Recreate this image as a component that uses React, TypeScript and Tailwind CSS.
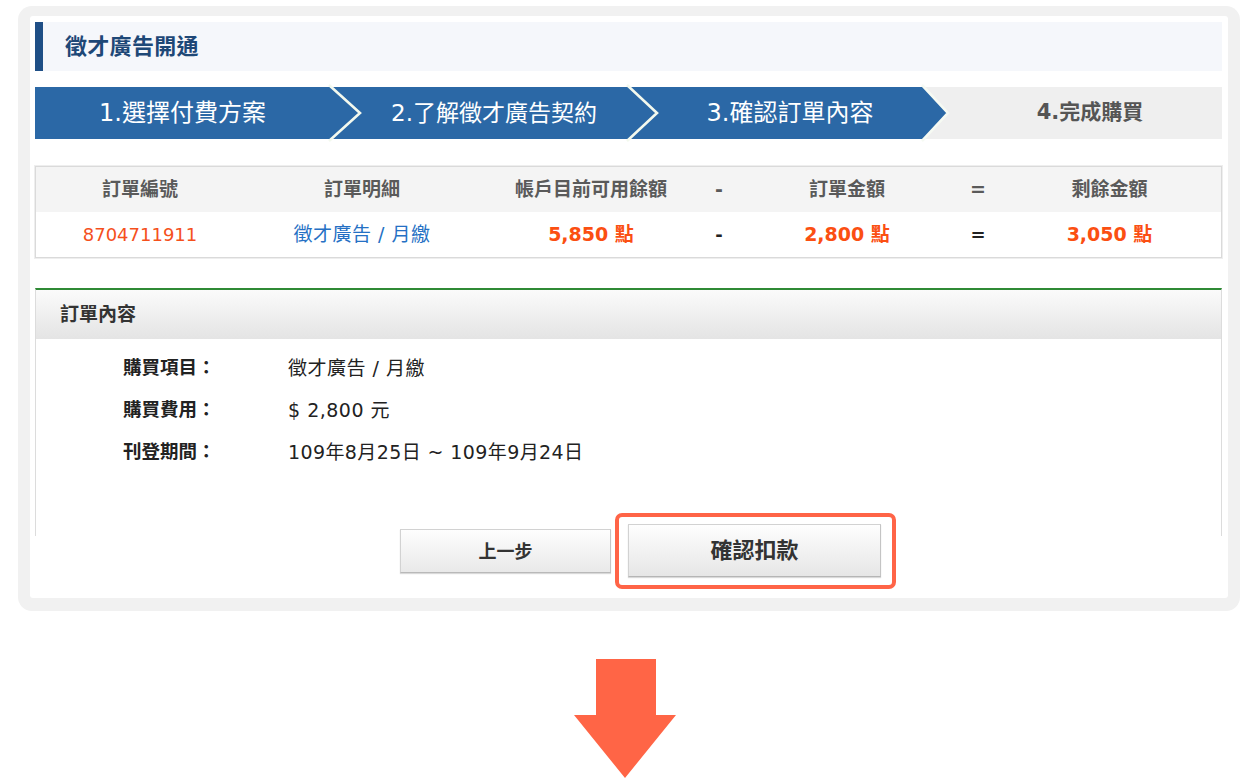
import React from "react";

const BLUE = "#2b68a6";

function Chevron({ d, last }: { d: number; last?: boolean }) {
  return (
    <svg
      className="absolute left-full top-0 z-10 overflow-visible"
      width={d}
      height={52}
      viewBox={`0 0 ${d} 52`}
    >
      <polygon points={`0,0 ${d},26 0,52`} fill={BLUE} />
      <polyline
        points={`-1,-2 ${d},26 -1,54`}
        fill="none"
        stroke={last ? "#f6faf3" : "#f3f9ee"}
        strokeWidth={2.6}
      />
    </svg>
  );
}

export default function App() {
  return (
    <div className="w-[1250px] h-[784px] bg-white font-['DejaVu_Sans','Noto_Sans_CJK_TC',sans-serif] text-[#222]">
      <div className="pt-[6px] pl-[18px]">
        <div className="w-[1222px] rounded-[14px] bg-[#f1f1f1] pt-[10px] pl-[12px] pr-[12px] pb-[13px]">
          <div className="bg-white rounded-[3px] pt-[6px] pl-[5px] pr-[6px] pb-[9px]">
            {/* Title bar */}
            <div className="h-[49px] flex items-center bg-[#f5f7fb] border-l-[8px] border-[#1f4f86]">
              <span className="ml-[22px] text-[22px] font-bold text-[#1e4877] tracking-[0.3px]">
                徵才廣告開通
              </span>
            </div>

            {/* Steps */}
            <div className="mt-[16px] h-[52px] flex bg-[#efefef]">
              <div className="relative w-[295px] flex items-center justify-center text-white text-[24px]" style={{ background: BLUE }}>
                1.選擇付費方案
                <Chevron d={30} />
              </div>
              <div className="relative w-[298px] flex items-center justify-center pl-[30px] text-white text-[23px]" style={{ background: BLUE }}>
                2.了解徵才廣告契約
                <Chevron d={29} />
              </div>
              <div className="relative w-[295px] flex items-center justify-center pl-[29px] text-white text-[24px]" style={{ background: BLUE }}>
                3.確認訂單內容
                <Chevron d={25} last />
              </div>
              <div className="flex-1 flex items-center justify-center pl-[35px] text-[21px] font-bold text-[#555]">
                4.完成購買
              </div>
            </div>

            {/* Order table */}
            <div className="mt-[27px] border border-[#dadada] shadow-[0_0_0_1px_#eeeeee]">
              <div className="grid grid-cols-[208px_236px_222px_34px_222px_40px_1fr] h-[45px] bg-[#f4f4f4] items-center text-center text-[19px] font-bold text-[#5a5a5a]">
                <div>訂單編號</div>
                <div>訂單明細</div>
                <div>帳戶目前可用餘額</div>
                <div>-</div>
                <div>訂單金額</div>
                <div>=</div>
                <div>剩餘金額</div>
              </div>
              <div className="grid grid-cols-[208px_236px_222px_34px_222px_40px_1fr] h-[45px] bg-white items-center text-center text-[18px]">
                <div className="text-[#f5501c]">8704711911</div>
                <div className="text-[#2570c4] text-[19px] tracking-[0.5px]">徵才廣告 / 月繳</div>
                <div className="text-[#fb4f12] font-bold text-[19px]">5,850 點</div>
                <div className="text-[#222] font-bold">-</div>
                <div className="text-[#fb4f12] font-bold text-[19px]">2,800 點</div>
                <div className="text-[#222] font-bold">=</div>
                <div className="text-[#fb4f12] font-bold text-[19px]">3,050 點</div>
              </div>
            </div>

            {/* Order content panel */}
            <div className="mt-[30px]">
              <div className="h-[51px] border-t-2 border-[#2f8a35] bg-gradient-to-b from-[#fbfbfb] to-[#e4e4e4] flex items-center pl-[24px] text-[19px] font-bold text-[#333] border-x border-x-[#dcdcdc]">
                訂單內容
              </div>
              <div className="h-[197px] border-x border-[#dcdcdc] pt-[8px] text-[19px]">
                <div className="h-[42px] flex items-center">
                  <div className="w-[252px] pl-[87px] font-bold text-[#222] text-[18.5px]">購買項目：</div>
                  <div className="text-[#222] tracking-[0.5px]">徵才廣告 / 月繳</div>
                </div>
                <div className="h-[42px] flex items-center">
                  <div className="w-[252px] pl-[87px] font-bold text-[#222] text-[18.5px]">購買費用：</div>
                  <div className="text-[#222] tracking-[0.5px]">$ 2,800 元</div>
                </div>
                <div className="h-[42px] flex items-center">
                  <div className="w-[252px] pl-[87px] font-bold text-[#222] text-[18.5px]">刊登期間：</div>
                  <div className="text-[#222] tracking-[0.4px]">109年8月25日 ~ 109年9月24日</div>
                </div>
              </div>

              {/* Buttons */}
              <div className="-mt-[23px] flex items-center pl-[365px]">
                <button className="w-[211px] h-[44px] border border-[#d2d2d2] border-b-[#b9b9b9] border-r-[#c4c4c4] bg-gradient-to-b from-[#fefefe] to-[#e9e9e9] text-[18px] font-bold text-[#333] shadow-[0_1px_1px_rgba(0,0,0,0.15)]">
                  上一步
                </button>
                <div className="ml-[4px] border-[4px] border-[#ff6447] rounded-[7px] pt-[7px] pb-[8px] pl-[9px] pr-[11px] bg-white">
                  <button className="w-[253px] h-[53px] border border-[#d2d2d2] border-b-[#b5b5b5] border-r-[#c4c4c4] bg-gradient-to-b from-[#fefefe] to-[#e6e6e6] text-[22px] font-bold text-[#333] shadow-[0_1px_1px_rgba(0,0,0,0.15)]">
                    確認扣款
                  </button>
                </div>
              </div>
            </div>
          </div>
        </div>
      </div>

      {/* Down arrow */}
      <div className="mt-[48px] ml-[574px]">
        <svg width="102" height="120" viewBox="0 0 102 120">
          <polygon points="22,0 82,0 82,56 102,56 51,119 0,56 22,56" fill="#ff6546" />
        </svg>
      </div>
    </div>
  );
}
